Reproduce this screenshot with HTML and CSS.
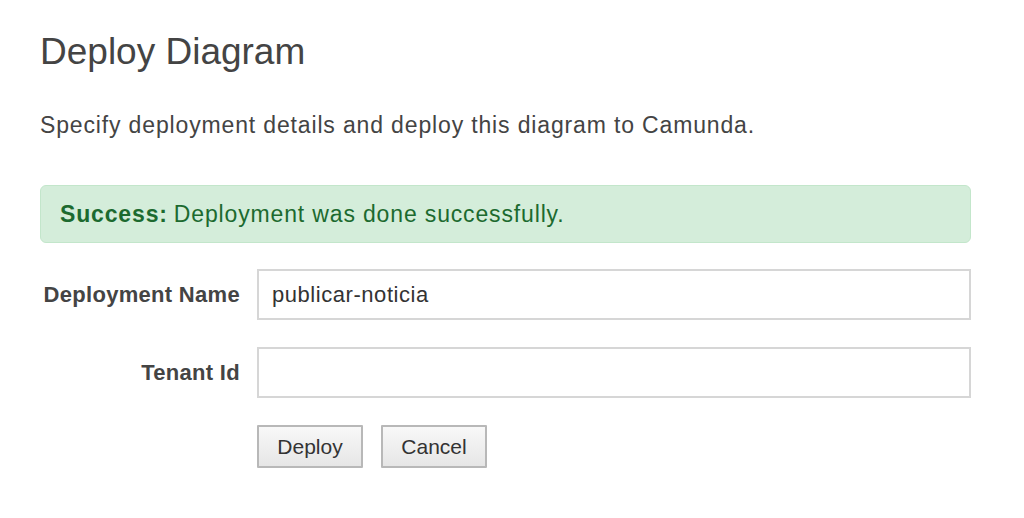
FILE: index.html
```html
<!DOCTYPE html>
<html>
<head>
<meta charset="utf-8">
<link rel="stylesheet" href="styles.css">
</head>
<body>
<div class="page">
  <h1 class="title">Deploy Diagram</h1>
  <p class="intro">Specify deployment details and deploy this diagram to Camunda.</p>
  <div class="alert"><strong>Success:</strong> Deployment was done successfully.</div>
  <form class="form">
    <div class="row">
      <label class="label">Deployment Name</label>
      <div class="field"><input class="input" type="text" value="publicar-noticia"></div>
    </div>
    <div class="row">
      <label class="label">Tenant Id</label>
      <div class="field"><input class="input" type="text" value=""></div>
    </div>
    <div class="row actions">
      <div class="label"></div>
      <div class="buttons">
        <button type="button" class="btn">Deploy</button>
        <button type="button" class="btn">Cancel</button>
      </div>
    </div>
  </form>
</div>
</body>
</html>
```

FILE: styles.css
```css
* { box-sizing: border-box; }
html, body { margin: 0; padding: 0; background: #fff; }
body {
  font-family: "Liberation Sans", Arial, sans-serif;
  color: #444;
}
.page {
  padding: 30px 53px 0 40px;
}
.title {
  margin: 0;
  font-size: 37px;
  font-weight: normal;
  line-height: 44px;
  color: #444;
}
.intro {
  margin: 38px 0 0 0;
  font-size: 23px;
  letter-spacing: 0.85px;
  line-height: 26px;
  color: #444;
}
.alert {
  margin-top: 47px;
  height: 58px;
  padding: 0 19px;
  display: flex;
  align-items: center;
  background: #d4edda;
  border: 1px solid #c3e6cb;
  border-radius: 6px;
  color: #1c6a2f;
  font-size: 23px;
  letter-spacing: 0.85px;
}
.alert strong { font-weight: bold; margin-right: 6px; }
.form {
  margin-top: 26px;
  display: flex;
  flex-direction: column;
  gap: 27px;
}
.row {
  display: flex;
  align-items: center;
}
.label {
  width: 217px;
  flex: none;
  padding-right: 17px;
  text-align: right;
  font-weight: bold;
  font-size: 22px;
  letter-spacing: 0.3px;
  color: #444;
}
.field { flex: 1; }
.input {
  display: block;
  width: 100%;
  height: 51px;
  border: 2px solid #d6d6d6;
  padding: 0 13px;
  font-family: "Liberation Sans", Arial, sans-serif;
  font-size: 22px;
  letter-spacing: 0.55px;
  color: #333;
  background: #fff;
  outline: none;
}
.buttons {
  display: flex;
  gap: 18px;
}
.btn {
  width: 106px;
  height: 43px;
  border: 2px solid #b8b8b8;
  border-radius: 1px;
  background: linear-gradient(#f8f8f8, #e6e6e6);
  font-family: "Liberation Sans", Arial, sans-serif;
  font-size: 21px;
  color: #333;
  padding: 0;
}
```
